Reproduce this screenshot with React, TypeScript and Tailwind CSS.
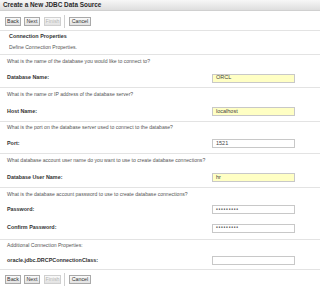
import React from "react";

const font = { fontFamily: '"Liberation Sans", Arial, sans-serif' };

function Btn({ label, disabled, w }: { label: string; disabled?: boolean; w: string }) {
  return (
    <div
      className={`${w} h-[9px] flex items-center justify-center border text-[5.3px] leading-none bg-gradient-to-b from-[#fafafa] to-[#e2e2e2] ${
        disabled ? "text-[#b5b5b5] border-[#d0d0d0]" : "text-[#333] border-[#a9a9a9]"
      }`}
    >
      {label}
    </div>
  );
}

function Buttons({ h, pt }: { h: string; pt: string }) {
  return (
    <div className={`${h} ${pt} flex items-start pl-[5px]`}>
      <Btn w="w-[16px]" label="Back" />
      <div className="w-[3px]" />
      <Btn w="w-[16px]" label="Next" />
      <div className="w-[4px]" />
      <Btn w="w-[17px]" label="Finish" disabled />
      <div className="w-[1px] h-[13px] bg-[#d0d0d0] ml-[3px] mr-[4px] -mt-[2px]" />
      <Btn w="w-[22px]" label="Cancel" />
    </div>
  );
}

function Divider() {
  return <div className="h-[1px] bg-[#e3e3e3]" />;
}

function Question({ text, h }: { text: string; h: string }) {
  return (
    <div className={`${h} flex items-center pl-[7px] text-[5.1px] text-[#555] leading-none`}>
      {text}
    </div>
  );
}

function Field({
  label,
  value,
  yellow,
  password,
  h,
}: {
  label: string;
  value: string;
  yellow?: boolean;
  password?: boolean;
  h: string;
}) {
  return (
    <div className={`${h} flex items-center pl-[7px]`}>
      <div className="w-[205px] text-[5.4px] font-bold text-[#333] leading-none">{label}</div>
      <div
        className={`w-[83px] h-[9px] border border-[#c8c8c8] flex items-center pl-[3px] leading-none ${
          yellow ? "bg-[#ffffc4]" : "bg-white"
        } ${password ? "text-[3.2px] tracking-[0.6px] text-[#333]" : "text-[5.5px] text-[#444]"}`}
      >
        {value}
      </div>
    </div>
  );
}

export default function App() {
  return (
    <div className="w-[320px] h-[289px] bg-white overflow-hidden" style={font}>
      <div className="h-[11px] flex items-center pl-[3px] bg-gradient-to-b from-[#f7f7f7] to-[#dedede] border-b border-[#d0d0d0] text-[6.4px] font-bold text-[#2a2a2a] leading-none">
        Create a New JDBC Data Source
      </div>
      <Buttons h="h-[19px]" pt="pt-[6px]" />
      <Divider />
      <div className="h-[11px] flex items-center pl-[9px] text-[5.4px] font-bold text-[#333] leading-none pt-[1px]">
        Connection Properties
      </div>
      <div className="h-[12px] flex items-center pl-[9px] text-[5.1px] text-[#555] leading-none">
        Define Connection Properties.
      </div>
      <Divider />
      <Question h="h-[14px]" text="What is the name of the database you would like to connect to?" />
      <Field h="h-[18px]" label="Database Name:" value="ORCL" yellow />
      <Divider />
      <Question h="h-[14px]" text="What is the name or IP address of the database server?" />
      <Field h="h-[19px]" label="Host Name:" value="localhost" yellow />
      <Divider />
      <Question h="h-[12px]" text="What is the port on the database server used to connect to the database?" />
      <Field h="h-[19px]" label="Port:" value="1521" />
      <Divider />
      <Question h="h-[14px]" text="What database account user name do you want to use to create database connections?" />
      <Field h="h-[19px]" label="Database User Name:" value="hr" yellow />
      <Divider />
      <Question h="h-[14px]" text="What is the database account password to use to create database connections?" />
      <Field h="h-[15px]" label="Password:" value="●●●●●●●●●" password />
      <Field h="h-[22px]" label="Confirm Password:" value="●●●●●●●●●" password />
      <Divider />
      <Question h="h-[12px]" text="Additional Connection Properties:" />
      <Field h="h-[17px]" label="oracle.jdbc.DRCPConnectionClass:" value="" />
      <Divider />
      <Buttons h="h-[17px]" pt="pt-[5px]" />
    </div>
  );
}
